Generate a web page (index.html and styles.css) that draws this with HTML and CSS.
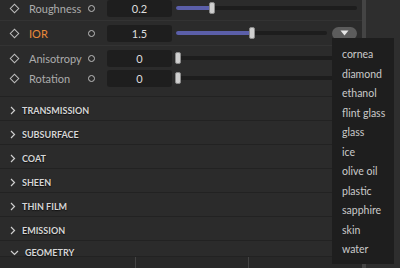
FILE: index.html
```html
<!DOCTYPE html>
<html lang="en">
  <head>
    <meta charset="UTF-8" />
    <title>Material - Physical</title>
    <link rel="stylesheet" href="styles.css">
  </head>
  <body>
    <div class="screen">
      <div class="panel">
        <div class="prop-row">
          <span class="key-cell"><span class="key-icon"></span></span>
          <span class="prop-label">Roughness</span>
          <span class="link-cell"><span class="link-icon"></span></span>
          <div class="num-field">0.2</div>
          <div class="slider"><div class="fill" style="width: 36px"><span class="thumb"></span></div></div>
        </div>

        <div class="prop-row">
          <span class="key-cell"><span class="key-icon"></span></span>
          <span class="prop-label active">IOR</span>
          <span class="link-cell"><span class="link-icon"></span></span>
          <div class="num-field">1.5</div>
          <div class="slider"><div class="fill" style="width: 76px"><span class="thumb"></span></div></div>
          <div class="preset-btn">
            <svg width="9" height="6" viewBox="0 0 9 6"><path d="M0.5 0.5 H8.5 L4.5 5.5 Z" fill="#e6e6e6"/></svg>
          </div>
        </div>

        <div class="prop-group">
          <div class="prop-row slim">
            <span class="key-cell"><span class="key-icon"></span></span>
            <span class="prop-label">Anisotropy</span>
            <span class="link-cell"><span class="link-icon"></span></span>
            <div class="num-field">0</div>
            <div class="slider"><div class="fill" style="width: 2px"><span class="thumb"></span></div></div>
          </div>
          <div class="prop-row slim">
            <span class="key-cell"><span class="key-icon"></span></span>
            <span class="prop-label">Rotation</span>
            <span class="link-cell"><span class="link-icon"></span></span>
            <div class="num-field">0</div>
            <div class="slider"><div class="fill" style="width: 2px"><span class="thumb"></span></div></div>
          </div>
        </div>

        <div class="section"><div class="section-head"><svg class="chev" width="6" height="9" viewBox="0 0 6 9"><path d="M1 1 L4.5 4.5 L1 8" /></svg>TRANSMISSION</div></div>
        <div class="section"><div class="section-head"><svg class="chev" width="6" height="9" viewBox="0 0 6 9"><path d="M1 1 L4.5 4.5 L1 8" /></svg>SUBSURFACE</div></div>
        <div class="section"><div class="section-head"><svg class="chev" width="6" height="9" viewBox="0 0 6 9"><path d="M1 1 L4.5 4.5 L1 8" /></svg>COAT</div></div>
        <div class="section"><div class="section-head"><svg class="chev" width="6" height="9" viewBox="0 0 6 9"><path d="M1 1 L4.5 4.5 L1 8" /></svg>SHEEN</div></div>
        <div class="section"><div class="section-head"><svg class="chev" width="6" height="9" viewBox="0 0 6 9"><path d="M1 1 L4.5 4.5 L1 8" /></svg>THIN FILM</div></div>
        <div class="section"><div class="section-head"><svg class="chev" width="6" height="9" viewBox="0 0 6 9"><path d="M1 1 L4.5 4.5 L1 8" /></svg>EMISSION</div></div>
        <div class="section open">
          <div class="section-head"><svg class="chev" width="9" height="6" viewBox="0 0 9 6"><path d="M1 1 L4.5 4.5 L8 1" /></svg>GEOMETRY</div>
          <div class="section-body">
            <div class="cell first"></div>
            <div class="cell"></div>
            <div class="cell"></div>
          </div>
        </div>
      </div>

      <div class="scrollbar"></div>
      <div class="side"></div>

      <ul class="preset-menu">
        <li>cornea</li>
        <li>diamond</li>
        <li>ethanol</li>
        <li>flint glass</li>
        <li>glass</li>
        <li>ice</li>
        <li>olive oil</li>
        <li>plastic</li>
        <li>sapphire</li>
        <li>skin</li>
        <li>water</li>
      </ul>
    </div>
  </body>
</html>
```

FILE: styles.css
```css
body {
  margin: 0;
  background: #2b2b2b;
  font-family: Lato, "Noto Sans", sans-serif;
  font-size: 11px;
  color: #b4b4b4;
}
.screen {
  position: relative;
  display: flex;
  width: 400px;
  height: 268px;
  overflow: hidden;
}
.panel {
  width: 362px;
  margin-top: -4px;
  flex-shrink: 0;
}
.prop-row {
  display: flex;
  align-items: center;
  height: 24px;
  padding: 0 5px 0 10px;
  border-bottom: 1px solid #333;
}
.prop-group {
  padding: 2px 0 8px;
  border-bottom: 1px solid #222;
}
.prop-row.slim {
  height: 20px;
  border-bottom: none;
}
.key-cell,
.link-cell {
  display: flex;
  align-items: center;
  justify-content: center;
  width: 9px;
  flex-shrink: 0;
}
.link-cell {
  width: 10px;
}
.key-icon {
  width: 5px;
  height: 5px;
  border: 1.5px solid #bdbdbd;
  transform: rotate(45deg);
}
.link-icon {
  width: 5px;
  height: 5px;
  border: 1.5px solid #bdbdbd;
  border-radius: 50%;
}
.prop-label {
  width: 57px;
  margin-left: 10px;
  flex-shrink: 0;
  color: #ababab;
  white-space: nowrap;
}
.prop-label.active {
  color: #e8893a;
}
.num-field {
  width: 65px;
  height: 17px;
  margin-left: 11px;
  flex-shrink: 0;
  background: #1e1e1e;
  border-radius: 3px;
  color: #dedede;
  text-align: center;
  line-height: 17px;
}
.slider {
  position: relative;
  flex: 1;
  height: 4px;
  margin-left: 4px;
  background: #1d1d1d;
  border-radius: 2px;
}
.fill {
  position: relative;
  height: 4px;
  background: #5b5fa9;
  border-radius: 2px;
}
.thumb {
  position: absolute;
  right: -3px;
  top: -4px;
  width: 4px;
  height: 10px;
  background: #cfcfcf;
  border: 1px solid #8a8a8a;
  border-radius: 2px;
}
.preset-btn {
  display: flex;
  align-items: center;
  justify-content: center;
  width: 25px;
  height: 13px;
  margin-left: 5px;
  background: #5c5c5c;
  border-radius: 7px;
}
.section-head {
  display: flex;
  align-items: center;
  gap: 6px;
  height: 20px;
  padding: 3px 0 0 10px;
  border-bottom: 1px solid #222;
  font-size: 9px;
  font-weight: bold;
  color: #d6d6d6;
  text-shadow: 0 1px 1px #111;
}
.chev {
  fill: none;
  stroke: #cfcfcf;
  stroke-width: 1.2;
}
.section.open .section-head {
  height: 10px;
  padding-top: 5px;
  align-items: flex-end;
  line-height: 6px;
}
.section-body {
  display: flex;
  height: 12px;
  background: #282828;
}
.cell {
  width: 128px;
  border-left: 1px solid #444;
}
.cell.first {
  width: 153px;
  border-left: none;
}
.scrollbar {
  width: 4px;
  background: #444;
  flex-shrink: 0;
}
.side {
  flex: 1;
  background: #2e2e2e;
}
.preset-menu {
  position: absolute;
  left: 332px;
  top: 38px;
  width: 62px;
  margin: 0;
  padding: 7px 0 4px;
  list-style: none;
  background: #1e1e1e;
  font-size: 10.5px;
}
.preset-menu li {
  height: 19.5px;
  line-height: 19.5px;
  padding-left: 10px;
  color: #cacaca;
  white-space: nowrap;
}
```
